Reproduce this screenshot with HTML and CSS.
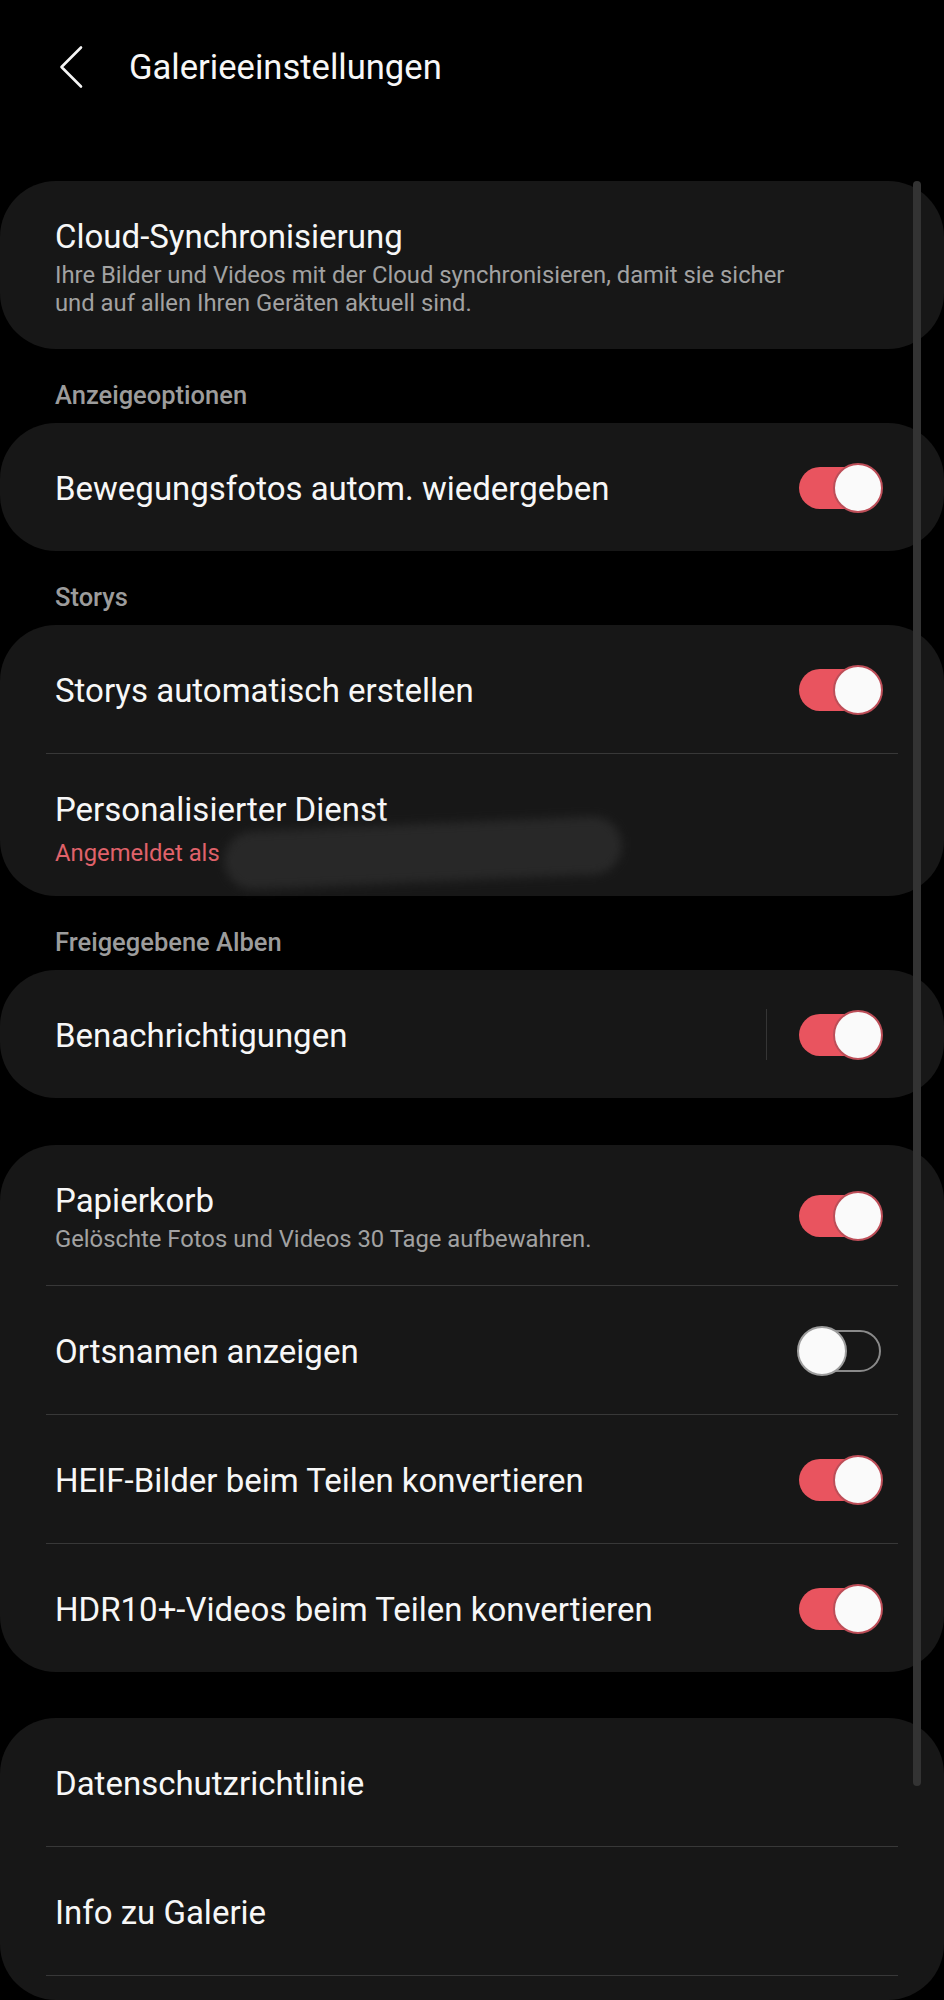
FILE: index.html
```html
<!DOCTYPE html>
<html lang="de">
<head>
<meta charset="utf-8">
<title>Galerieeinstellungen</title>
<link rel="stylesheet" href="styles.css">
</head>
<body>
<div class="page">
  <header class="topbar">
    <svg class="back" width="28" height="44" viewBox="0 0 28 44" aria-hidden="true">
      <path d="M24 2.5 L4.5 22 L24 41.5" fill="none" stroke="#f5f5f5" stroke-width="2.6" stroke-linecap="round" stroke-linejoin="round"/>
    </svg>
    <h1 class="title">Galerieeinstellungen</h1>
  </header>

  <section class="card">
    <div class="row">
      <div class="text">
        <div class="label">Cloud-Synchronisierung</div>
        <div class="sub">Ihre Bilder und Videos mit der Cloud synchronisieren, damit sie sicher<br>und auf allen Ihren Geräten aktuell sind.</div>
      </div>
    </div>
  </section>

  <div class="section-head">Anzeigeoptionen</div>
  <section class="card">
    <div class="row">
      <div class="text"><div class="label">Bewegungsfotos autom. wiedergeben</div></div>
      <div class="toggle on"><span class="track"></span><span class="thumb"></span></div>
    </div>
  </section>

  <div class="section-head">Storys</div>
  <section class="card">
    <div class="row">
      <div class="text"><div class="label">Storys automatisch erstellen</div></div>
      <div class="toggle on"><span class="track"></span><span class="thumb"></span></div>
    </div>
    <div class="divider"></div>
    <div class="row redacted-row">
      <div class="text">
        <div class="label">Personalisierter Dienst</div>
        <div class="sub accent">Angemeldet als</div>
      </div>
      <span class="redaction"></span>
    </div>
  </section>

  <div class="section-head">Freigegebene Alben</div>
  <section class="card">
    <div class="row">
      <div class="text"><div class="label">Benachrichtigungen</div></div>
      <span class="vsep"></span>
      <div class="toggle on"><span class="track"></span><span class="thumb"></span></div>
    </div>
  </section>

  <section class="card spaced">
    <div class="row">
      <div class="text">
        <div class="label">Papierkorb</div>
        <div class="sub">Gelöschte Fotos und Videos 30 Tage aufbewahren.</div>
      </div>
      <div class="toggle on"><span class="track"></span><span class="thumb"></span></div>
    </div>
    <div class="divider"></div>
    <div class="row">
      <div class="text"><div class="label">Ortsnamen anzeigen</div></div>
      <div class="toggle off"><span class="track"></span><span class="thumb"></span></div>
    </div>
    <div class="divider"></div>
    <div class="row">
      <div class="text"><div class="label">HEIF-Bilder beim Teilen konvertieren</div></div>
      <div class="toggle on"><span class="track"></span><span class="thumb"></span></div>
    </div>
    <div class="divider"></div>
    <div class="row">
      <div class="text"><div class="label">HDR10+-Videos beim Teilen konvertieren</div></div>
      <div class="toggle on"><span class="track"></span><span class="thumb"></span></div>
    </div>
  </section>

  <section class="card spaced last">
    <div class="row">
      <div class="text"><div class="label">Datenschutzrichtlinie</div></div>
    </div>
    <div class="divider"></div>
    <div class="row">
      <div class="text"><div class="label">Info zu Galerie</div></div>
    </div>
    <div class="divider"></div>
  </section>

  <div class="scrollbar"></div>
</div>
</body>
</html>
```

FILE: styles.css
```css
* { box-sizing: border-box; }

html, body {
  margin: 0;
  padding: 0;
  background: #000;
}

body {
  font-family: Roboto, "Noto Sans", "Liberation Sans", sans-serif;
  color: #f7f7f7;
  overflow: hidden;
}

.page {
  position: relative;
  width: 944px;
  height: 2000px;
  overflow: hidden;
}

.topbar {
  display: flex;
  align-items: center;
  height: 133px;
  margin-bottom: 48px;
  padding-left: 57px;
}

.back {
  display: block;
  flex: none;
}

.title {
  margin: 0 0 0 44px;
  font-size: 34.6px;
  font-weight: 400;
  line-height: 40px;
  color: #f7f7f7;
}

.card {
  background: #171717;
  border-radius: 56px;
}

.card.spaced {
  margin-top: 47px;
}

.card.spaced.last {
  margin-top: 46px;
  padding-bottom: 24px;
}

.row {
  position: relative;
  display: flex;
  align-items: center;
  min-height: 128px;
  padding: 36px 61px 32px 55px;
}

.row.redacted-row {
  padding-bottom: 29px;
}

.text {
  flex: 1;
  min-width: 0;
}

.label {
  font-size: 33px;
  line-height: 40px;
  color: #f7f7f7;
}

.sub {
  margin-top: 4px;
  font-size: 23.8px;
  line-height: 28px;
  color: #a2a2a2;
}

.sub.accent {
  margin-top: 9px;
  color: #e0626a;
}

.divider {
  height: 1px;
  margin: 0 46px;
  background: #383838;
}

.section-head {
  padding: 34px 55px 16px;
  font-size: 25.5px;
  font-weight: 500;
  line-height: 24px;
  color: #9c9c9c;
}

.vsep {
  flex: none;
  width: 1px;
  height: 51px;
  margin-right: 30px;
  margin-top: -3px;
  background: #353535;
}

.toggle {
  position: relative;
  flex: none;
  width: 86px;
  height: 50px;
  margin-top: -3px;
}

.toggle .track {
  position: absolute;
  top: 4px;
  bottom: 4px;
  left: 2px;
  right: 2px;
  border-radius: 21px;
}

.toggle .thumb {
  position: absolute;
  top: 0;
  width: 50px;
  height: 50px;
  border-radius: 50%;
  background: #fafafa;
}

.toggle.on .track {
  background: #e9545f;
}

.toggle.on .thumb {
  right: 0;
  border: 2.5px solid #bd4e58;
}

.toggle.off .track {
  border: 2.5px solid #8a8a8a;
  background: transparent;
}

.toggle.off .thumb {
  left: 0;
  border: 2.5px solid #9c9c9c;
}

.redaction {
  position: absolute;
  left: 224px;
  top: 70px;
  width: 398px;
  height: 58px;
  border-radius: 30px;
  background: #282828;
  filter: blur(5px);
  transform: rotate(-2.5deg);
}

.scrollbar {
  position: absolute;
  left: 913px;
  top: 181px;
  width: 8px;
  height: 1605px;
  border-radius: 4px;
  background: #333;
}
```
